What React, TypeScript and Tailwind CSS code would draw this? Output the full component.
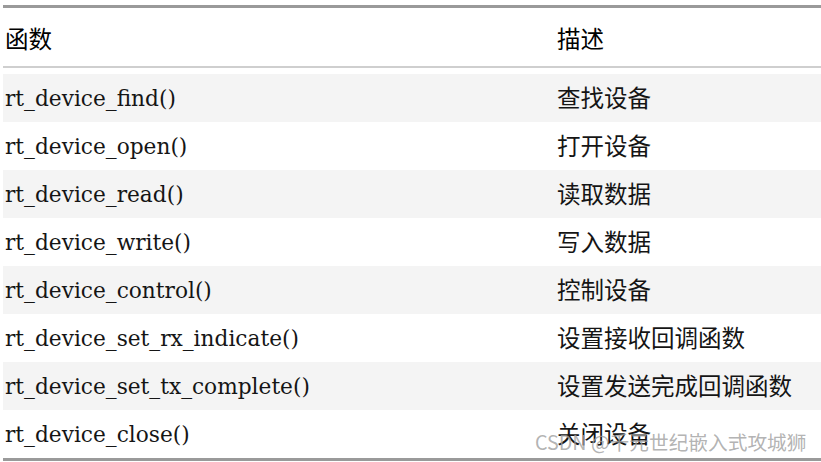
import React from 'react';

interface ApiRow {
  name: string;
  desc: string;
}

const rows: ApiRow[] = [
  { name: 'rt_device_find()', desc: '查找设备' },
  { name: 'rt_device_open()', desc: '打开设备' },
  { name: 'rt_device_read()', desc: '读取数据' },
  { name: 'rt_device_write()', desc: '写入数据' },
  { name: 'rt_device_control()', desc: '控制设备' },
  { name: 'rt_device_set_rx_indicate()', desc: '设置接收回调函数' },
  { name: 'rt_device_set_tx_complete()', desc: '设置发送完成回调函数' },
  { name: 'rt_device_close()', desc: '关闭设备' },
];

const cjk = "font-['Noto_Sans_CJK_SC',sans-serif]";

const App: React.FC = () => {
  return (
    <div className="relative w-[821px] h-[462px] overflow-hidden bg-white pt-[5px] pl-[3px] text-[#151515]">
      <div className="flex flex-col border-t-[3px] border-[#9a9a9a]">
        <div className="flex items-center h-[60px] pt-[4px] border-b-2 border-[#cfcfcf]">
          <div className={`w-[552px] pl-[2px] text-[23.5px] text-black ${cjk}`}>函数</div>
          <div className={`pl-[2px] text-[23.5px] text-black ${cjk}`}>描述</div>
        </div>
        <div className="h-[6px]" />
        {rows.map((row, i) => (
          <div
            key={row.name}
            className={`flex items-center h-[48px] ${i % 2 === 0 ? 'bg-[#f4f4f4]' : 'bg-white'}`}
          >
            <div className="w-[552px] pl-[2px] pt-[2px] font-['DejaVu_Serif',serif] text-[21.7px]">
              {row.name}
            </div>
            <div className={`pl-[2px] text-[23.5px] ${cjk}`}>{row.desc}</div>
          </div>
        ))}
        <div className="h-[3px] bg-[#9a9a9a]" />
      </div>
      <div className={`absolute left-[535px] top-[427px] text-[19.7px] text-[#a0a0a0]/80 ${cjk}`}>
        CSDN @千元世纪嵌入式攻城狮
      </div>
    </div>
  );
};

export default App;
